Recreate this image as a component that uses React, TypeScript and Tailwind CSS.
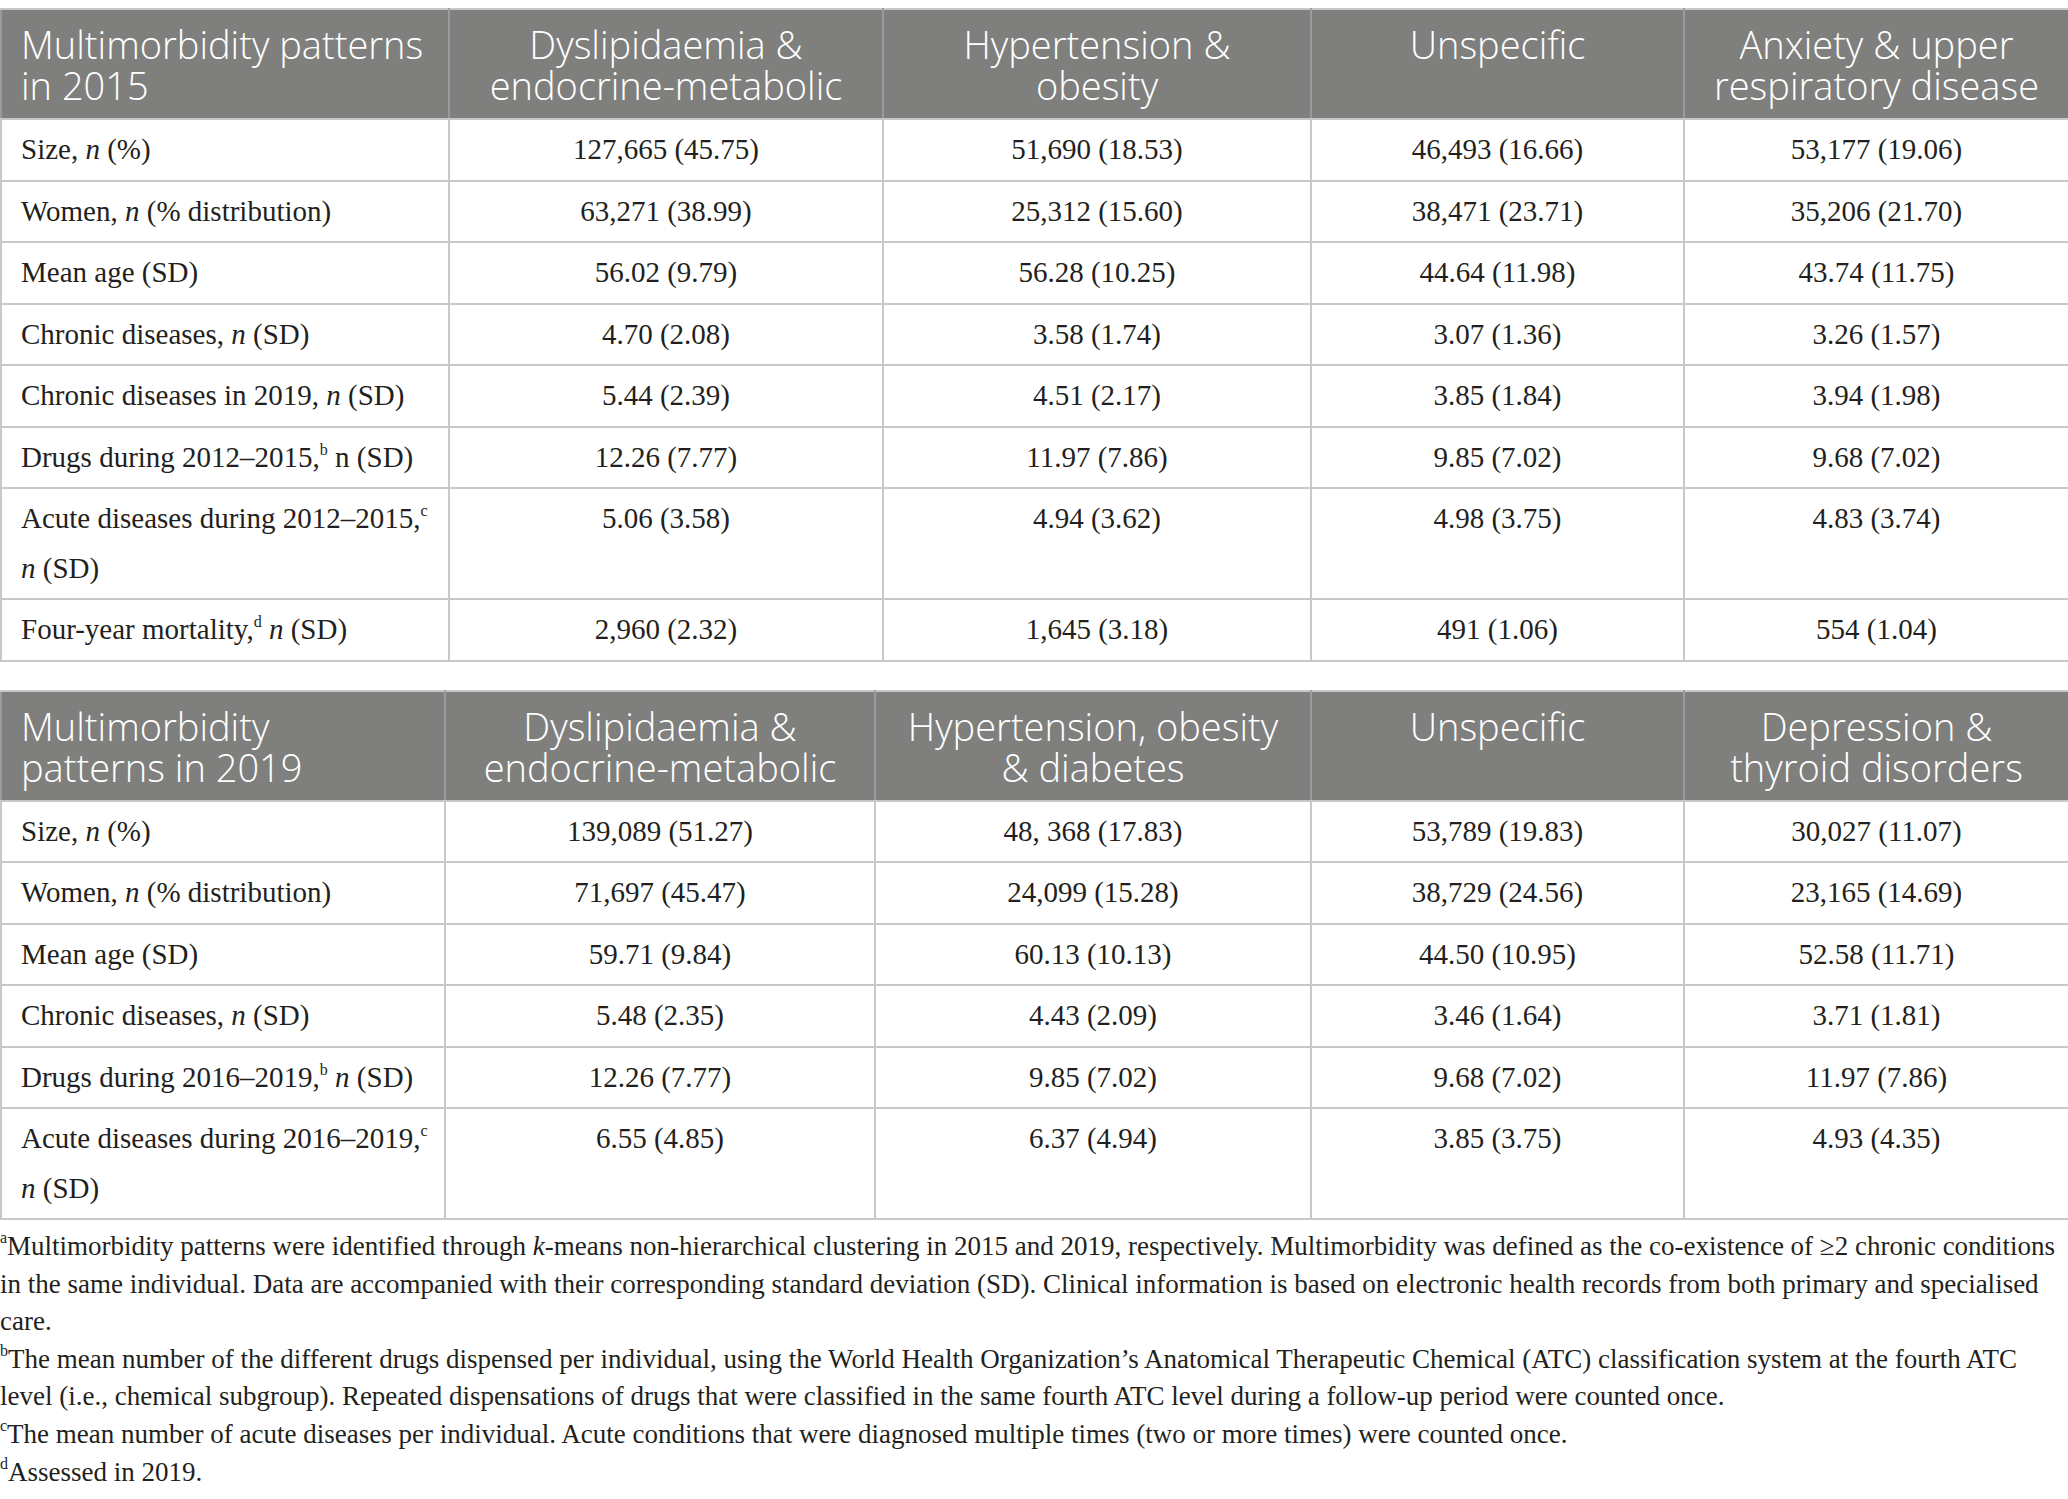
import React from "react";

type Row = { label: React.ReactNode; values: string[] };

const serif = { fontFamily: '"Liberation Serif", "Times New Roman", serif' };

const Sup = ({ children }: { children: React.ReactNode }) => (
  <sup className="text-[16px] leading-none align-[0.75em] relative top-0">{children}</sup>
);

const N = () => <i>n</i>;

const table1Head = [
  ["Multimorbidity patterns", "in 2015"],
  ["Dyslipidaemia &", "endocrine-metabolic"],
  ["Hypertension &", "obesity"],
  ["Unspecific"],
  ["Anxiety & upper", "respiratory disease"],
];

const table1Rows: Row[] = [
  { label: <>Size, <N /> (%)</>, values: ["127,665 (45.75)", "51,690 (18.53)", "46,493 (16.66)", "53,177 (19.06)"] },
  { label: <>Women, <N /> (% distribution)</>, values: ["63,271 (38.99)", "25,312 (15.60)", "38,471 (23.71)", "35,206 (21.70)"] },
  { label: <>Mean age (SD)</>, values: ["56.02 (9.79)", "56.28 (10.25)", "44.64 (11.98)", "43.74 (11.75)"] },
  { label: <>Chronic diseases, <N /> (SD)</>, values: ["4.70 (2.08)", "3.58 (1.74)", "3.07 (1.36)", "3.26 (1.57)"] },
  { label: <>Chronic diseases in 2019, <N /> (SD)</>, values: ["5.44 (2.39)", "4.51 (2.17)", "3.85 (1.84)", "3.94 (1.98)"] },
  { label: <>Drugs during 2012–2015,<Sup>b</Sup> n (SD)</>, values: ["12.26 (7.77)", "11.97 (7.86)", "9.85 (7.02)", "9.68 (7.02)"] },
  {
    label: <>Acute diseases during 2012–2015,<Sup>c</Sup><br /><N /> (SD)</>,
    values: ["5.06 (3.58)", "4.94 (3.62)", "4.98 (3.75)", "4.83 (3.74)"],
  },
  { label: <>Four-year mortality,<Sup>d</Sup> <N /> (SD)</>, values: ["2,960 (2.32)", "1,645 (3.18)", "491 (1.06)", "554 (1.04)"] },
];

const table2Head = [
  ["Multimorbidity", "patterns in 2019"],
  ["Dyslipidaemia &", "endocrine-metabolic"],
  ["Hypertension, obesity", "& diabetes"],
  ["Unspecific"],
  ["Depression &", "thyroid disorders"],
];

const table2Rows: Row[] = [
  { label: <>Size, <N /> (%)</>, values: ["139,089 (51.27)", "48, 368 (17.83)", "53,789 (19.83)", "30,027 (11.07)"] },
  { label: <>Women, <N /> (% distribution)</>, values: ["71,697 (45.47)", "24,099 (15.28)", "38,729 (24.56)", "23,165 (14.69)"] },
  { label: <>Mean age (SD)</>, values: ["59.71 (9.84)", "60.13 (10.13)", "44.50 (10.95)", "52.58 (11.71)"] },
  { label: <>Chronic diseases, <N /> (SD)</>, values: ["5.48 (2.35)", "4.43 (2.09)", "3.46 (1.64)", "3.71 (1.81)"] },
  { label: <>Drugs during 2016–2019,<Sup>b</Sup> <N /> (SD)</>, values: ["12.26 (7.77)", "9.85 (7.02)", "9.68 (7.02)", "11.97 (7.86)"] },
  {
    label: <>Acute diseases during 2016–2019,<Sup>c</Sup><br /><N /> (SD)</>,
    values: ["6.55 (4.85)", "6.37 (4.94)", "3.85 (3.75)", "4.93 (4.35)"],
  },
];

const DataTable = ({ head, rows, widths }: { head: string[][]; rows: Row[]; widths: number[] }) => (
  <table className="w-full table-fixed border-collapse border-2 border-[#c8c8c8]">
    <colgroup>
      {widths.map((w, i) => (
        <col key={i} style={{ width: w }} />
      ))}
    </colgroup>
    <thead>
      <tr className="bg-[#7f807e]">
        {head.map((lines, i) => (
          <th
            key={i}
            className={`border-2 border-t-[#c8c8c8] border-x-[#9b9b9b] border-b-[#c8c8c8] px-[19px] pt-[14px] pb-[12px] align-top text-[38px] leading-[41px] font-light text-white ${
              i === 0 ? "text-left" : "text-center"
            }`}
            style={{ fontFamily: '"Open Sans", "Noto Sans", sans-serif' }}
          >
            {lines.map((l, j) => (
              <div key={j} className="whitespace-nowrap">
                {l}
              </div>
            ))}
          </th>
        ))}
      </tr>
    </thead>
    <tbody style={serif}>
      {rows.map((r, i) => (
        <tr key={i}>
          <td className="border-2 border-[#c8c8c8] px-[19px] py-[5px] align-top text-[29px] leading-[49.5px] text-[#231f20] whitespace-nowrap">
            {r.label}
          </td>
          {r.values.map((v, j) => (
            <td
              key={j}
              className="border-2 border-[#c8c8c8] px-[10px] py-[5px] align-top text-center text-[29px] leading-[49.5px] text-[#231f20]"
            >
              {v}
            </td>
          ))}
        </tr>
      ))}
    </tbody>
  </table>
);

const Foot = ({ mark, children }: { mark?: string; children: React.ReactNode }) => (
  <div className="whitespace-nowrap">
    {mark && <Sup>{mark}</Sup>}
    {children}
  </div>
);

export default function App() {
  return (
    <div className="w-[2068px] h-[1499px] bg-white pt-[8px] overflow-hidden">
      <DataTable head={table1Head} rows={table1Rows} widths={[448, 434, 428, 373, 385]} />
      <div className="h-[28px]" />
      <DataTable head={table2Head} rows={table2Rows} widths={[444, 430, 436, 373, 385]} />
      <div className="mt-[8px] text-[27px] leading-[37.6px] text-[#231f20]" style={serif}>
        <Foot mark="a">
          Multimorbidity patterns were identified through <i>k</i>-means non-hierarchical clustering in 2015 and 2019,
          respectively. Multimorbidity was defined as the co-existence of ≥2 chronic conditions
        </Foot>
        <Foot>
          in the same individual. Data are accompanied with their corresponding standard deviation (SD). Clinical
          information is based on electronic health records from both primary and specialised
        </Foot>
        <Foot>care.</Foot>
        <Foot mark="b">
          The mean number of the different drugs dispensed per individual, using the World Health Organization’s
          Anatomical Therapeutic Chemical (ATC) classification system at the fourth ATC
        </Foot>
        <Foot>
          level (i.e., chemical subgroup). Repeated dispensations of drugs that were classified in the same fourth ATC
          level during a follow-up period were counted once.
        </Foot>
        <Foot mark="c">
          The mean number of acute diseases per individual. Acute conditions that were diagnosed multiple times (two or
          more times) were counted once.
        </Foot>
        <Foot mark="d">Assessed in 2019.</Foot>
      </div>
    </div>
  );
}
